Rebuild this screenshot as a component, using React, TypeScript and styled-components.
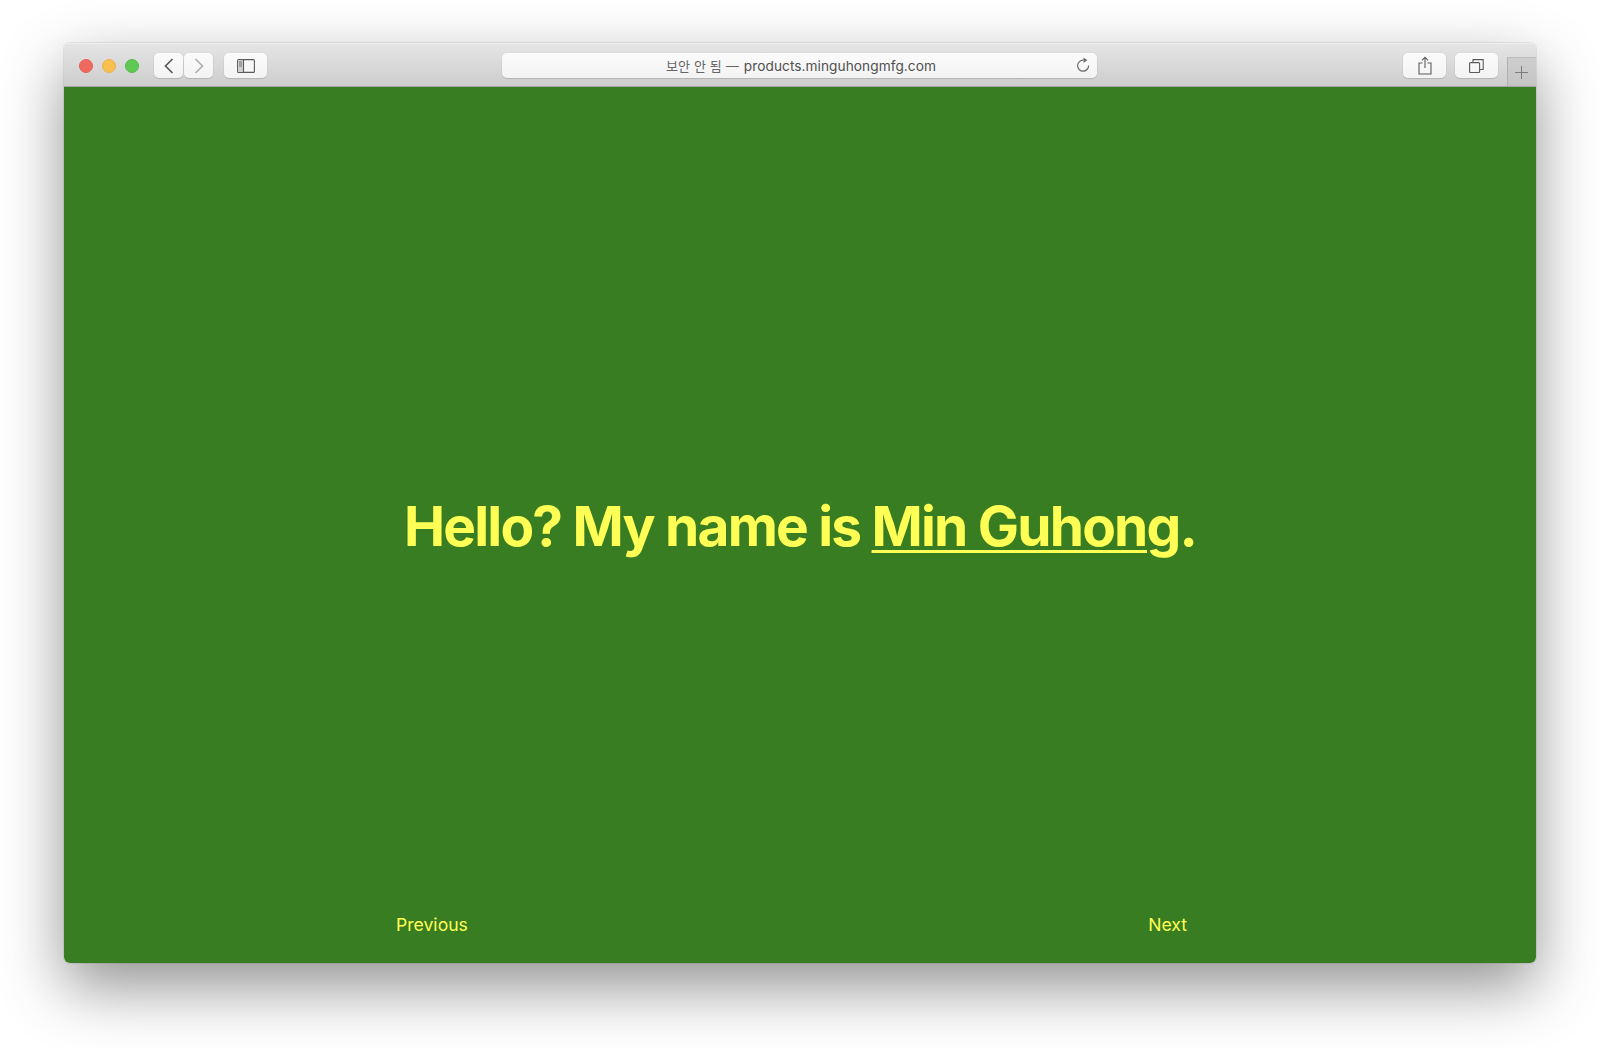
import React from "react";
import styled, { createGlobalStyle } from "styled-components";

const Global = createGlobalStyle`
  html, body { margin: 0; padding: 0; background: #fff; }
  body { font-family: Inter, "Liberation Sans", sans-serif; }
`;

const Page = styled.div`
  box-sizing: border-box;
  width: 1600px;
  height: 1048px;
  padding: 43px 64px 85px;
  overflow: hidden;
`;

const Browser = styled.div`
  height: 100%;
  display: flex;
  flex-direction: column;
  border-radius: 6px;
  overflow: hidden;
  box-shadow: 0 24px 62px 0 rgba(0, 0, 0, 0.43), 0 0 0 1px rgba(0, 0, 0, 0.07);
`;

const Toolbar = styled.header`
  box-sizing: border-box;
  flex: 0 0 44px;
  display: flex;
  align-items: flex-start;
  padding: 9px 0 0 15px;
  background: linear-gradient(#e5e5e5, #cdcdcd);
  border-top: 1px solid #efefef;
  border-bottom: 1px solid #a4a4a4;
`;

const Lights = styled.div`
  display: flex;
  gap: 9px;
  padding-top: 6px;
  margin-right: 15px;
`;

const Light = styled.span<{ $color: string; $edge: string }>`
  box-sizing: border-box;
  width: 14px;
  height: 14px;
  border-radius: 50%;
  background: ${(p) => p.$color};
  border: 1px solid ${(p) => p.$edge};
`;

const Button = styled.div<{ $w: number; $ml?: number }>`
  box-sizing: border-box;
  flex: 0 0 ${(p) => p.$w}px;
  height: 25px;
  margin-left: ${(p) => p.$ml ?? 0}px;
  display: flex;
  align-items: center;
  justify-content: center;
  border-radius: 5px;
  background: linear-gradient(#fbfbfb, #f3f3f3);
  box-shadow: 0 1px 1px rgba(0, 0, 0, 0.12), 0 0 0 0.5px rgba(0, 0, 0, 0.05);
`;

const Address = styled(Button)`
  position: relative;
  padding-left: 3px;
  font-size: 13.7px;
  letter-spacing: 0.05px;
  color: #505050;
  white-space: nowrap;
  font-family: Inter, "Noto Sans CJK KR", sans-serif;
`;

const Insecure = styled.span`
  color: #666666;
  font-size: 13px;
  word-spacing: 0.2px;
  font-family: Inter, "Noto Sans CJK KR", sans-serif;
  font-weight: 400;
  margin-right: 5px;
`;

const Reload = styled.svg`
  position: absolute;
  right: 5px;
  top: 4px;
`;

const NewTab = styled.div`
  box-sizing: border-box;
  margin-left: auto;
  align-self: flex-end;
  width: 29px;
  height: 29px;
  padding-right: 1px;
  display: flex;
  align-items: center;
  justify-content: center;
  background: linear-gradient(#cecece, #c4c4c4);
  border-left: 1px solid #b0b0b0;
  border-top: 1px solid #bdbdbd;
`;

const Content = styled.main`
  flex: 1;
  display: grid;
  grid-template-rows: 1fr auto 1fr;
  background: #397d22;
  color: #ffff55;
`;

const Heading = styled.h1`
  grid-row: 2;
  margin: 0;
  padding-top: 2px;
  text-align: center;
  font-size: 55px;
  line-height: 66px;
  font-weight: 700;
  letter-spacing: -1.8px;
`;

const Name = styled.a`
  color: inherit;
  text-decoration: underline;
  text-decoration-thickness: 3px;
  text-underline-offset: 4px;
  text-decoration-skip-ink: auto;
`;

const Pager = styled.nav`
  grid-row: 3;
  align-self: end;
  display: flex;
  justify-content: space-between;
  padding: 0 349px 26px 332px;
  font-size: 17.6px;
  line-height: 24px;
`;

const icon = { fill: "none", stroke: "#5a5a5a", strokeWidth: 1.4 };

export default function App() {
  return (
    <Page>
      <Global />
      <Browser>
        <Toolbar>
          <Lights>
            <Light $color="#f0695e" $edge="#e55f55" />
            <Light $color="#f8c050" $edge="#ecb244" />
            <Light $color="#60c855" $edge="#55bc4a" />
          </Lights>
          <Button $w={29}>
            <svg width="12" height="18" viewBox="0 0 12 18">
              <path d="M9.5 2 L2.5 9 L9.5 16" {...icon} strokeWidth={1.7} />
            </svg>
          </Button>
          <Button $w={29} $ml={1}>
            <svg width="12" height="18" viewBox="0 0 12 18">
              <path d="M2.5 2 L9.5 9 L2.5 16" {...icon} stroke="#b0b0b0" strokeWidth={1.7} />
            </svg>
          </Button>
          <Button $w={43} $ml={11}>
            <svg width="18" height="14" viewBox="0 0 18 14">
              <rect x="0.6" y="0.6" width="16.8" height="12.8" rx="1" {...icon} strokeWidth={1.1} />
              <rect x="1" y="1" width="5" height="12" fill="#cfcfcf" />
              <path d="M6.5 1 V13" {...icon} strokeWidth={1.1} />
              <path d="M2 3 H5 M2 5 H5 M2 7 H5" {...icon} strokeWidth={0.8} />
            </svg>
          </Button>
          <Address $w={595} $ml={235}>
            <Insecure>보안 안 됨 —</Insecure>
            <span>products.minguhongmfg.com</span>
            <Reload width="17" height="17" viewBox="0 0 17 17">
              <path d="M13.6 8.5 A5.5 5.5 0 1 1 8.5 3.2" fill="none" stroke="#6a6a6a" strokeWidth="1.2" />
              <path d="M8.5 0.6 L12.4 3.2 L8.5 5.8 Z" fill="#6a6a6a" />
            </Reload>
          </Address>
          <Button $w={43} $ml={306}>
            <svg width="14" height="19" viewBox="0 0 14 19">
              <path d="M4.5 7 H1 V18 H13 V7 H9.5" {...icon} strokeWidth={1.1} />
              <path d="M7 12 V1.5 M4 4.3 L7 1.2 L10 4.3" {...icon} strokeWidth={1.1} />
            </svg>
          </Button>
          <Button $w={43} $ml={9}>
            <svg width="15" height="14" viewBox="0 0 15 14">
              <rect x="0.6" y="3.6" width="10" height="10" rx="1" {...icon} strokeWidth={1.1} />
              <path d="M4 3.5 V0.6 H14.2 V10.5 H11" {...icon} strokeWidth={1.1} />
            </svg>
          </Button>
          <NewTab>
            <svg width="13" height="13" viewBox="0 0 13 13">
              <path d="M6.5 0 V13 M0 6.5 H13" fill="none" stroke="#7d7d7d" strokeWidth="1" />
            </svg>
          </NewTab>
        </Toolbar>
        <Content>
          <Heading>
            Hello? My name is <Name>Min Guhong</Name>.
          </Heading>
          <Pager>
            <span>Previous</span>
            <span>Next</span>
          </Pager>
        </Content>
      </Browser>
    </Page>
  );
}
